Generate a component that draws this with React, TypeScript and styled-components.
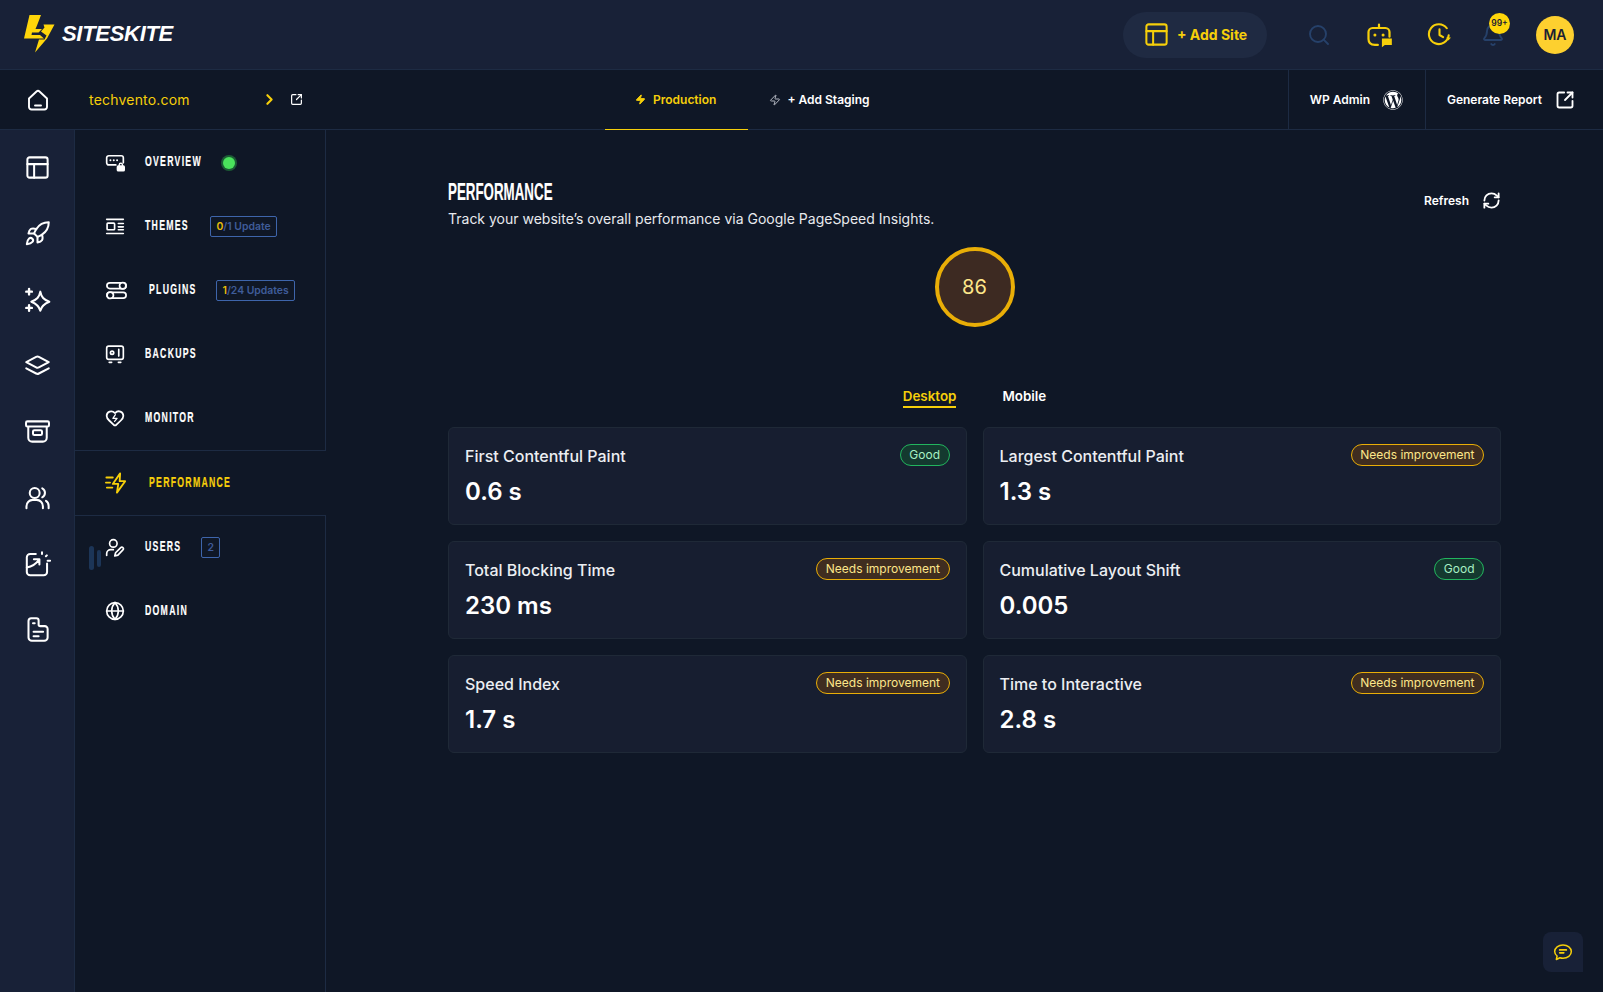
import React, { FC, ReactNode } from 'react';
import styled, { createGlobalStyle } from 'styled-components';
import { ChevronRight, Globe, PanelsTopLeft, RefreshCw, Rocket, Search, SquareArrowOutUpRight, Zap, Bell } from 'lucide-react';
import { FaWordpress } from 'react-icons/fa';

const yellow = '#f6cf0a';
const line = '#1d2b43';
const navy = '#182137';
const ink = '#0f1726';

const GlobalStyle = createGlobalStyle`
    html, body {
        margin: 0;
        height: 100%;
        overflow: hidden;
        background: ${ink};
    }
    body {
        font-family: Inter, "Liberation Sans", sans-serif;
        color: #fff;
    }
    * {
        box-sizing: border-box;
    }
`;

const Page = styled.div`
    position: relative;
    display: flex;
    flex-direction: column;
    width: 100%;
    height: 100vh;
    overflow: hidden;
`;

const TopBar = styled.header`
    display: flex;
    align-items: center;
    justify-content: space-between;
    flex: 0 0 70px;
    padding: 0 29px 0 24px;
    background: ${navy};
    border-bottom: 1px solid ${line};
`;

const Brand = styled.div`
    display: flex;
    align-items: center;
    gap: 7px;
    margin-top: -2px;
`;

const BrandName = styled.span`
    margin-top: 1px;
    font-family: "Liberation Sans", sans-serif;
    font-size: 22px;
    font-weight: 700;
    font-style: italic;
    letter-spacing: -0.3px;
`;

const TopActions = styled.div`
    display: flex;
    align-items: center;
`;

const AddSite = styled.button`
    display: flex;
    align-items: center;
    gap: 7px;
    width: 144px;
    height: 46px;
    margin-right: 40px;
    padding: 0 0 0 20px;
    border: 0;
    border-radius: 23px;
    background: #1f2a42;
    color: ${yellow};
    font: 700 14px Inter, sans-serif;
`;

const TopIcon = styled.span<{ $color?: string; $gap?: number }>`
    position: relative;
    display: flex;
    align-items: center;
    justify-content: center;
    width: 24px;
    height: 24px;
    margin-right: ${(p) => p.$gap ?? 36}px;
    color: ${(p) => p.$color ?? yellow};

    svg {
        flex-shrink: 0;
    }
`;

const CountBadge = styled.span`
    position: absolute;
    top: -10px;
    left: 8px;
    display: flex;
    align-items: center;
    justify-content: center;
    width: 21px;
    height: 21px;
    border-radius: 50%;
    background: #ffd60a;
    color: #1a2133;
    font-size: 8.5px;
    font-weight: 600;
`;

const Avatar = styled.span`
    display: flex;
    align-items: center;
    justify-content: center;
    width: 38px;
    height: 38px;
    border-radius: 50%;
    background: #fdd02f;
    color: #1a2133;
    font-size: 14px;
    font-weight: 600;
`;

const SubBar = styled.div`
    display: flex;
    align-items: stretch;
    flex: 0 0 60px;
    background: ${ink};
    border-bottom: 1px solid ${line};
`;

const HomeCell = styled.div`
    display: flex;
    align-items: center;
    justify-content: center;
    width: 76px;
    color: #fff;
`;

const SiteCell = styled.div`
    display: flex;
    align-items: center;
    width: 529px;
    padding-left: 13px;
    color: ${yellow};
`;

const SiteName = styled.span`
    width: 172px;
    font-size: 14px;
    letter-spacing: 0.2px;
`;

const ExternalLink = styled.span`
    display: flex;
    margin-left: 12px;
    color: #fff;
`;

const EnvTab = styled.div<{ $active?: boolean }>`
    display: flex;
    align-items: center;
    gap: ${(p) => (p.$active ? 7 : 6)}px;
    height: 60px;
    margin-bottom: -1px;
    padding: ${(p) => (p.$active ? '0 32px 0 30px' : '0 22px 0 21px')};
    border-bottom: 1px solid ${(p) => (p.$active ? yellow : 'transparent')};
    color: ${(p) => (p.$active ? yellow : '#fff')};
    font-size: 12px;
    font-weight: 600;
`;

const SubSpacer = styled.div`
    flex: 1;
`;

const SubAction = styled.div<{ $width: number; $gap: number }>`
    display: flex;
    align-items: center;
    justify-content: flex-end;
    gap: ${(p) => p.$gap}px;
    width: ${(p) => p.$width}px;
    padding-right: ${(p) => (p.$width > 150 ? 28 : 22)}px;
    border-left: 1px solid ${line};
    font-size: 12px;
    font-weight: 600;
`;

const Body = styled.div`
    display: flex;
    flex: 1;
    min-height: 0;
`;

const Rail = styled.nav`
    display: flex;
    flex-direction: column;
    align-items: center;
    gap: 39px;
    flex: 0 0 75px;
    padding: 24px 0 0 1px;
    background: ${navy};
    border-right: 1px solid ${line};
`;

const RailIcon = styled.span`
    display: flex;
    align-items: center;
    justify-content: center;
    width: 27px;
    height: 27px;
    color: #fff;
`;

const SideNav = styled.aside`
    position: relative;
    display: flex;
    flex-direction: column;
    flex: 0 0 251px;
`;

const NavGroup = styled.div<{ $grow?: boolean }>`
    display: flex;
    flex-direction: column;
    flex: ${(p) => (p.$grow ? 1 : '0 0 auto')};
    border-right: 1px solid ${line};
    border-bottom: ${(p) => (p.$grow ? 'none' : `1px solid ${line}`)};
`;

const NavRow = styled.div<{ $active?: boolean; $divided?: boolean }>`
    display: flex;
    align-items: center;
    height: 64px;
    padding-left: 30px;
    border-top: ${(p) => (p.$divided ? `1px solid ${line}` : 'none')};
    color: ${(p) => (p.$active ? yellow : '#fff')};
`;

const NavIcon = styled.span`
    display: flex;
    align-items: center;
    justify-content: flex-start;
    flex: 0 0 20px;
    min-width: 0;
    height: 22px;

    svg {
        flex-shrink: 0;
    }
`;

const NavLabelBox = styled.span<{ $width: number; $indent: number }>`
    display: block;
    width: ${(p) => p.$width}px;
    margin: -5px 21px 0 ${(p) => p.$indent}px;
`;

const NavLabel = styled.span`
    display: inline-block;
    font-family: "Liberation Sans", sans-serif;
    font-size: 15px;
    font-weight: 700;
    letter-spacing: 2.2px;
    white-space: nowrap;
    -webkit-text-stroke: 0.2px currentColor;
    transform: scaleX(0.58);
    transform-origin: left center;
`;

const UpdateBadge = styled.span`
    display: flex;
    align-items: center;
    justify-content: center;
    height: 21px;
    padding: 0 5.5px;
    border: 1px solid #3e65ab;
    border-radius: 2px;
    color: #3f5c99;
    font-size: 10.4px;
    font-weight: 600;
    white-space: nowrap;
`;

const UpdateCount = styled.span`
    color: #e6bd0b;
`;

const StatusDot = styled.span`
    width: 12px;
    height: 12px;
    margin: 0 0 -1px 1px;
    border-radius: 50%;
    background: #4ae35c;
    box-shadow: 0 0 0 2px #1c5c35;
`;

const DragHandle = styled.span`
    position: absolute;
    left: 14px;
    top: 416px;
    display: flex;
    align-items: center;
    gap: 3px;
    height: 24px;
`;

const HandleBar = styled.span<{ $height: number; $width: number }>`
    width: ${(p) => p.$width}px;
    height: ${(p) => p.$height}px;
    border-radius: 3px;
    background: #1c3557;
`;

const Main = styled.main`
    flex: 1;
    min-width: 0;
    padding: 47px 102px 0 122px;
`;

const HeadRow = styled.div`
    display: flex;
    justify-content: space-between;
`;

const PageTitle = styled.h1`
    margin: 0;
    height: 30px;
    font-family: "Liberation Sans", sans-serif;
    font-size: 24px;
    line-height: 30px;
    font-weight: 700;
    white-space: nowrap;
    -webkit-text-stroke: 0.15px currentColor;
    transform: scaleX(0.556);
    transform-origin: left center;
`;

const PageHint = styled.p`
    margin: 0;
    font-size: 14px;
    line-height: 24px;
    color: #e8eaee;
`;

const RefreshButton = styled.div`
    display: flex;
    align-items: center;
    gap: 13px;
    height: 24px;
    margin-top: 11px;
    font-size: 12px;
    font-weight: 600;
`;

const Gauge = styled.div`
    display: flex;
    align-items: center;
    justify-content: center;
    width: 80px;
    height: 80px;
    margin: 16px auto 0;
    border: 4px solid #e9ae07;
    border-radius: 50%;
    background: #3d2a22;
    color: #fde68a;
    font-size: 20px;
`;

const DeviceTabs = styled.div`
    display: flex;
    justify-content: center;
    gap: 46px;
    margin-top: 60px;
    height: 40px;
`;

const DeviceTab = styled.span<{ $active?: boolean }>`
    height: 21px;
    border-bottom: 2px solid ${(p) => (p.$active ? yellow : 'transparent')};
    color: ${(p) => (p.$active ? yellow : '#fff')};
    font-size: 13.4px;
    line-height: 19px;
    font-weight: 600;
`;

const MetricGrid = styled.div`
    display: grid;
    grid-template-columns: 1fr 1fr;
    grid-auto-rows: 98px;
    gap: 16px;
`;

const MetricCard = styled.section`
    padding: 16px 16px 0;
    border: 1px solid #1f2937;
    border-radius: 6px;
    background: #171e30;
`;

const MetricHead = styled.div`
    display: flex;
    align-items: flex-start;
    justify-content: space-between;
`;

const MetricTitle = styled.h3`
    margin: 0;
    font-size: 16px;
    line-height: 24px;
    font-weight: 500;
    color: #eceef2;
`;

const MetricValue = styled.div`
    margin-top: 8px;
    font-size: 24px;
    line-height: 32px;
    font-weight: 600;
`;

const Pill = styled.span<{ $good: boolean }>`
    height: 22px;
    padding: 0 8.5px;
    border: 1px solid ${(p) => (p.$good ? '#22b55e' : '#e9ae07')};
    border-radius: 11px;
    background: ${(p) => (p.$good ? '#14392f' : '#3f2d20')};
    color: ${(p) => (p.$good ? '#a7f0c4' : '#fde68a')};
    font-size: 12px;
    line-height: 19px;
`;

const ChatButton = styled.div`
    position: absolute;
    right: 20px;
    bottom: 20px;
    display: flex;
    align-items: center;
    justify-content: center;
    width: 40px;
    height: 40px;
    border-radius: 8px 8px 0 8px;
    background: ${navy};
    color: ${yellow};
`;

type GlyphProps = { size?: number; width?: number; stroke?: number; children: ReactNode };

const Glyph: FC<GlyphProps> = ({ size = 24, width, stroke = 1.9, children }) => (
    <svg
        width={width ?? size}
        height={size}
        viewBox={`0 0 ${width ? (24 * width) / size : 24} 24`}
        fill="none"
        stroke="currentColor"
        strokeWidth={stroke}
        strokeLinecap="round"
        strokeLinejoin="round"
    >
        {children}
    </svg>
);

const LogoMark = () => (
    <svg width="31" height="38" viewBox="0 0 31 38">
        <path fill="#ffd60a" d="M5.5 0H17L13 10.5 11.5 14 18 14 14.5 17.5 8 17.5 7.5 20 16 20 20 23.5 0 23.5Z" />
        <path fill="#ffd60a" d="M19.5 9.5H30.5L23 23.5 11 37.5 15 24.5H20.5L22.5 20.5 17 16.5 20.5 12.5Z" />
    </svg>
);

const railIcons: ReactNode[] = [
    <PanelsTopLeft key="panel" size={27} strokeWidth={1.8} />,
    <Rocket key="rocket" size={27} strokeWidth={1.8} />,
    <Glyph key="spark" size={27} stroke={1.8}>
        <path d="M14.5 5c1 5 3 7 8 9-5 2-7 4-8 8-1-4-3-6-8-8 5-2 7-4 8-9z" />
        <path d="M4.5 2.5v5M2 5h5M4.5 17v5M2 19.5h5" strokeWidth={2.1} />
    </Glyph>,
    <Glyph key="layers" size={27} stroke={1.8}>
        <path d="M10.8 4.4a2.5 2.5 0 0 1 2.4 0L22 9l-8.800 4.6a2.500 2.500 0 0 1-2.400 0L2 9z" />
        <path d="M2 14.500l8.800 4.600a2.500 2.500 0 0 0 2.400 0L22 14.500" />
    </Glyph>,
    <Glyph key="archive" size={27} stroke={1.8}>
        <rect x="1.8" y="3" width="20.4" height="4.6" rx="1.2" />
        <path d="M3.8 8v9.5A3.5 3.5 0 0 0 7.3 21h9.4a3.5 3.5 0 0 0 3.5-3.5V8" />
        <rect x="8" y="10.8" width="8" height="4.4" rx="1.2" />
    </Glyph>,
    <Glyph key="users" size={27} stroke={1.8}>
        <circle cx="9.500" cy="8" r="4.400" />
        <path d="M2.200 21.500v-1.800a5.600 5.600 0 0 1 5.600-5.600h3.400a5.600 5.600 0 0 1 5.600 5.600v1.800" />
        <path d="M16.200 3.800a4.500 4.500 0 0 1 0 8M19.500 15c1.500.9 2.400 2.600 2.400 4.600v1.900" />
    </Glyph>,
    <Glyph key="chart" size={27} stroke={1.8}>
        <path d="M10.500 3.500H5.500a3 3 0 0 0-3 3v13a3 3 0 0 0 3 3h12a3 3 0 0 0 3-3v-7.500" />
        <path d="M2.500 15.500c4.500-.8 8-3 10.800-6.800M8.800 8.200h4.900v4.600" />
        <path d="M16 2v1.600M20.300 4.800l-.8.8M21 9.500h2.200" />
    </Glyph>,
    <Glyph key="doc" size={27} stroke={1.8}>
        <path d="M4 4.500A2.500 2.500 0 0 1 6.500 2H11a2 2 0 0 1 2 2v3.500a1.500 1.500 0 0 0 1.500 1.500h4A2.500 2.500 0 0 1 21 11.500V19a3 3 0 0 1-3 3H7a3 3 0 0 1-3-3z" />
        <path d="M8 6.500h1.500M8.500 14h8.500M8.500 18h4.500" />
    </Glyph>,
];

const navIcons = {
    overview: (
        <Glyph size={20} stroke={2}>
            <path d="M22 13V7a2.500 2.500 0 0 0-2.500-2.500h-15A2.500 2.500 0 0 0 2 7v6a2.500 2.500 0 0 0 2.500 2.500H13" />
            <path d="M6.500 10h.01M10.500 10h.01M14.500 10h.01" strokeWidth={2.400} />
            <rect x="15" y="17" width="8" height="5.500" rx="1" fill="currentColor" />
            <path d="M17 17v-1.500a2 2 0 0 1 4 0V17" strokeWidth={1.600} />
        </Glyph>
    ),
    themes: (
        <Glyph size={20} stroke={2}>
            <path d="M2 4h20M2 21h20M16 9h6M16 13h6M16 16.500h6" />
            <rect x="2.500" y="8.500" width="9" height="8" rx="1" />
        </Glyph>
    ),
    plugins: (
        <Glyph size={23} stroke={1.800}>
            <rect x="2" y="4" width="20" height="6" rx="3" />
            <circle cx="18.500" cy="7" r="3.300" fill={ink} />
            <rect x="2" y="14" width="20" height="6" rx="3" />
            <circle cx="5.500" cy="17" r="3.300" fill={ink} />
        </Glyph>
    ),
    backups: (
        <Glyph size={20} stroke={2}>
            <rect x="2" y="2.500" width="20" height="16" rx="2.500" />
            <circle cx="8.500" cy="10.500" r="2" />
            <path d="M16.500 6.500v8M5 22h3M16 22h3" />
        </Glyph>
    ),
    monitor: (
        <Glyph size={20} stroke={2.100}>
            <path d="M2 9.500a5.500 5.500 0 0 1 9.591-3.676.56.56 0 0 0 .818 0A5.490 5.490 0 0 1 22 9.500c0 2.290-1.500 4-3 5.500l-5.492 5.313a2 2 0 0 1-3 .019L5 15c-1.500-1.500-3-3.200-3-5.500" />
            <path d="M12.500 8l-3 4.500h5l-3 3.500" strokeWidth={1.500} />
        </Glyph>
    ),
    performance: (
        <Glyph size={22} width={24} stroke={2}>
            <path d="M16.500 1.500 8.500 13h6l-1.500 9.500 9-12.500h-6z" />
            <path d="M1.500 6h7M1 11.500h4.500M2 17h6" />
        </Glyph>
    ),
    users: (
        <Glyph size={20} stroke={2}>
            <circle cx="10" cy="6.500" r="4.500" />
            <path d="M2 21v-2a5 5 0 0 1 5-5h3" />
            <path d="M21.500 11.500a1.800 1.800 0 0 0-2.600 0l-6.200 6.200-1 3.800 3.800-1 6-6.200a1.800 1.800 0 0 0 0-2.800z" />
        </Glyph>
    ),
    domain: <Globe size={20} strokeWidth={2} />,
};

type MetricStatus = 'Good' | 'Needs improvement';

const metrics: { title: string; value: string; status: MetricStatus }[] = [
    { title: 'First Contentful Paint', value: '0.6 s', status: 'Good' },
    { title: 'Largest Contentful Paint', value: '1.3 s', status: 'Needs improvement' },
    { title: 'Total Blocking Time', value: '230 ms', status: 'Needs improvement' },
    { title: 'Cumulative Layout Shift', value: '0.005', status: 'Good' },
    { title: 'Speed Index', value: '1.7 s', status: 'Needs improvement' },
    { title: 'Time to Interactive', value: '2.8 s', status: 'Needs improvement' },
];

const App: FC = () => (
    <Page>
        <GlobalStyle />
        <TopBar>
            <Brand>
                <LogoMark />
                <BrandName>SITESKITE</BrandName>
            </Brand>
            <TopActions>
                <AddSite>
                    <PanelsTopLeft size={27} strokeWidth={1.800} />
                    + Add Site
                </AddSite>
                <TopIcon $color="#26416a">
                    <Search size={24} strokeWidth={1.900} />
                </TopIcon>
                <TopIcon>
                    <Glyph size={28} stroke={1.900}>
                        <path d="M12 5.500V3M11 20.500H8.500C5 20.500 3 18.500 3 15.500V9.500A3.500 3.500 0 0 1 6.500 6h11A3.500 3.500 0 0 1 21 9.500v4" />
                        <path d="M8.500 12h.01M15.500 12h.01" strokeWidth={2.600} />
                        <path d="M14.500 15h8.500v5.500h-6l-2.500 2z" fill="currentColor" stroke="none" />
                    </Glyph>
                </TopIcon>
                <TopIcon $gap={30}>
                    <Glyph size={25} stroke={2}>
                        <path d="M20.800 12.800A9.500 9.500 0 1 1 19 6" />
                        <path d="M12 7v5.500l3.500 2" />
                        <path d="M18.500 14.800h4.500l-2.400 3z" fill="currentColor" stroke="none" />
                    </Glyph>
                </TopIcon>
                <TopIcon $color="#26416a" $gap={31}>
                    <Bell size={24} strokeWidth={1.900} />
                    <CountBadge>99+</CountBadge>
                </TopIcon>
                <Avatar>MA</Avatar>
            </TopActions>
        </TopBar>
        <SubBar>
            <HomeCell>
                <Glyph size={24} stroke={1.900}>
                    <path d="M3 10.500 10.500 3.500a2.200 2.200 0 0 1 3 0L21 10.500V19a2.500 2.500 0 0 1-2.500 2.500h-13A2.500 2.500 0 0 1 3 19z" />
                    <path d="M9 17.500h6" />
                </Glyph>
            </HomeCell>
            <SiteCell>
                <SiteName>techvento.com</SiteName>
                <ChevronRight size={17} strokeWidth={3} />
                <ExternalLink>
                    <SquareArrowOutUpRight size={13} strokeWidth={2.200} />
                </ExternalLink>
            </SiteCell>
            <EnvTab $active>
                <Zap size={11} fill={yellow} strokeWidth={2} />
                Production
            </EnvTab>
            <EnvTab>
                <Zap size={12} color="#b4b8c2" strokeWidth={2} />
                + Add Staging
            </EnvTab>
            <SubSpacer />
            <SubAction $width={137} $gap={13}>
                WP Admin
                <FaWordpress size={20} />
            </SubAction>
            <SubAction $width={178} $gap={13}>
                Generate Report
                <SquareArrowOutUpRight size={20} strokeWidth={2.200} />
            </SubAction>
        </SubBar>
        <Body>
            <Rail>
                {railIcons.map((icon, i) => (
                    <RailIcon key={i}>{icon}</RailIcon>
                ))}
            </Rail>
            <SideNav>
                <NavGroup>
                    <NavRow>
                        <NavIcon>{navIcons.overview}</NavIcon>
                        <NavLabelBox $width={56} $indent={20}>
                            <NavLabel>OVERVIEW</NavLabel>
                        </NavLabelBox>
                        <StatusDot />
                    </NavRow>
                    <NavRow>
                        <NavIcon>{navIcons.themes}</NavIcon>
                        <NavLabelBox $width={44} $indent={20}>
                            <NavLabel>THEMES</NavLabel>
                        </NavLabelBox>
                        <UpdateBadge>
                            <UpdateCount>0</UpdateCount>/1 Update
                        </UpdateBadge>
                    </NavRow>
                    <NavRow>
                        <NavIcon>{navIcons.plugins}</NavIcon>
                        <NavLabelBox $width={46} $indent={24}>
                            <NavLabel>PLUGINS</NavLabel>
                        </NavLabelBox>
                        <UpdateBadge>
                            <UpdateCount>1</UpdateCount>/24 Updates
                        </UpdateBadge>
                    </NavRow>
                    <NavRow>
                        <NavIcon>{navIcons.backups}</NavIcon>
                        <NavLabelBox $width={50} $indent={20}>
                            <NavLabel>BACKUPS</NavLabel>
                        </NavLabelBox>
                    </NavRow>
                    <NavRow>
                        <NavIcon>{navIcons.monitor}</NavIcon>
                        <NavLabelBox $width={50} $indent={20}>
                            <NavLabel>MONITOR</NavLabel>
                        </NavLabelBox>
                    </NavRow>
                </NavGroup>
                <NavRow $active>
                    <NavIcon>{navIcons.performance}</NavIcon>
                    <NavLabelBox $width={81} $indent={24}>
                        <NavLabel>PERFORMANCE</NavLabel>
                    </NavLabelBox>
                </NavRow>
                <NavGroup $grow>
                    <NavRow $divided>
                        <NavIcon>{navIcons.users}</NavIcon>
                        <NavLabelBox $width={35} $indent={20}>
                            <NavLabel>USERS</NavLabel>
                        </NavLabelBox>
                        <UpdateBadge>2</UpdateBadge>
                    </NavRow>
                    <NavRow>
                        <NavIcon>{navIcons.domain}</NavIcon>
                        <NavLabelBox $width={43} $indent={20}>
                            <NavLabel>DOMAIN</NavLabel>
                        </NavLabelBox>
                    </NavRow>
                </NavGroup>
                <DragHandle>
                    <HandleBar $width={5} $height={24} />
                    <HandleBar $width={3.500} $height={17} />
                </DragHandle>
            </SideNav>
            <Main>
                <HeadRow>
                    <div>
                        <PageTitle>PERFORMANCE</PageTitle>
                        <PageHint>Track your website’s overall performance via Google PageSpeed Insights.</PageHint>
                    </div>
                    <RefreshButton>
                        Refresh
                        <RefreshCw size={19} strokeWidth={2.300} />
                    </RefreshButton>
                </HeadRow>
                <Gauge>86</Gauge>
                <DeviceTabs>
                    <DeviceTab $active>Desktop</DeviceTab>
                    <DeviceTab>Mobile</DeviceTab>
                </DeviceTabs>
                <MetricGrid>
                    {metrics.map((m) => (
                        <MetricCard key={m.title}>
                            <MetricHead>
                                <MetricTitle>{m.title}</MetricTitle>
                                <Pill $good={m.status === 'Good'}>{m.status}</Pill>
                            </MetricHead>
                            <MetricValue>{m.value}</MetricValue>
                        </MetricCard>
                    ))}
                </MetricGrid>
            </Main>
        </Body>
        <ChatButton>
            <Glyph size={20} stroke={1.800}>
                <path d="M12 3.500c5.500 0 10 3.400 10 8s-4.500 8-10 8c-1.300 0-2.600-.2-3.700-.6L4 21l.9-4.200C3 15.300 2 13.500 2 11.500c0-4.600 4.500-8 10-8z" />
                <path d="M8 9.500h8M8 13h5" strokeWidth={2} />
            </Glyph>
        </ChatButton>
    </Page>
);

export default App;
